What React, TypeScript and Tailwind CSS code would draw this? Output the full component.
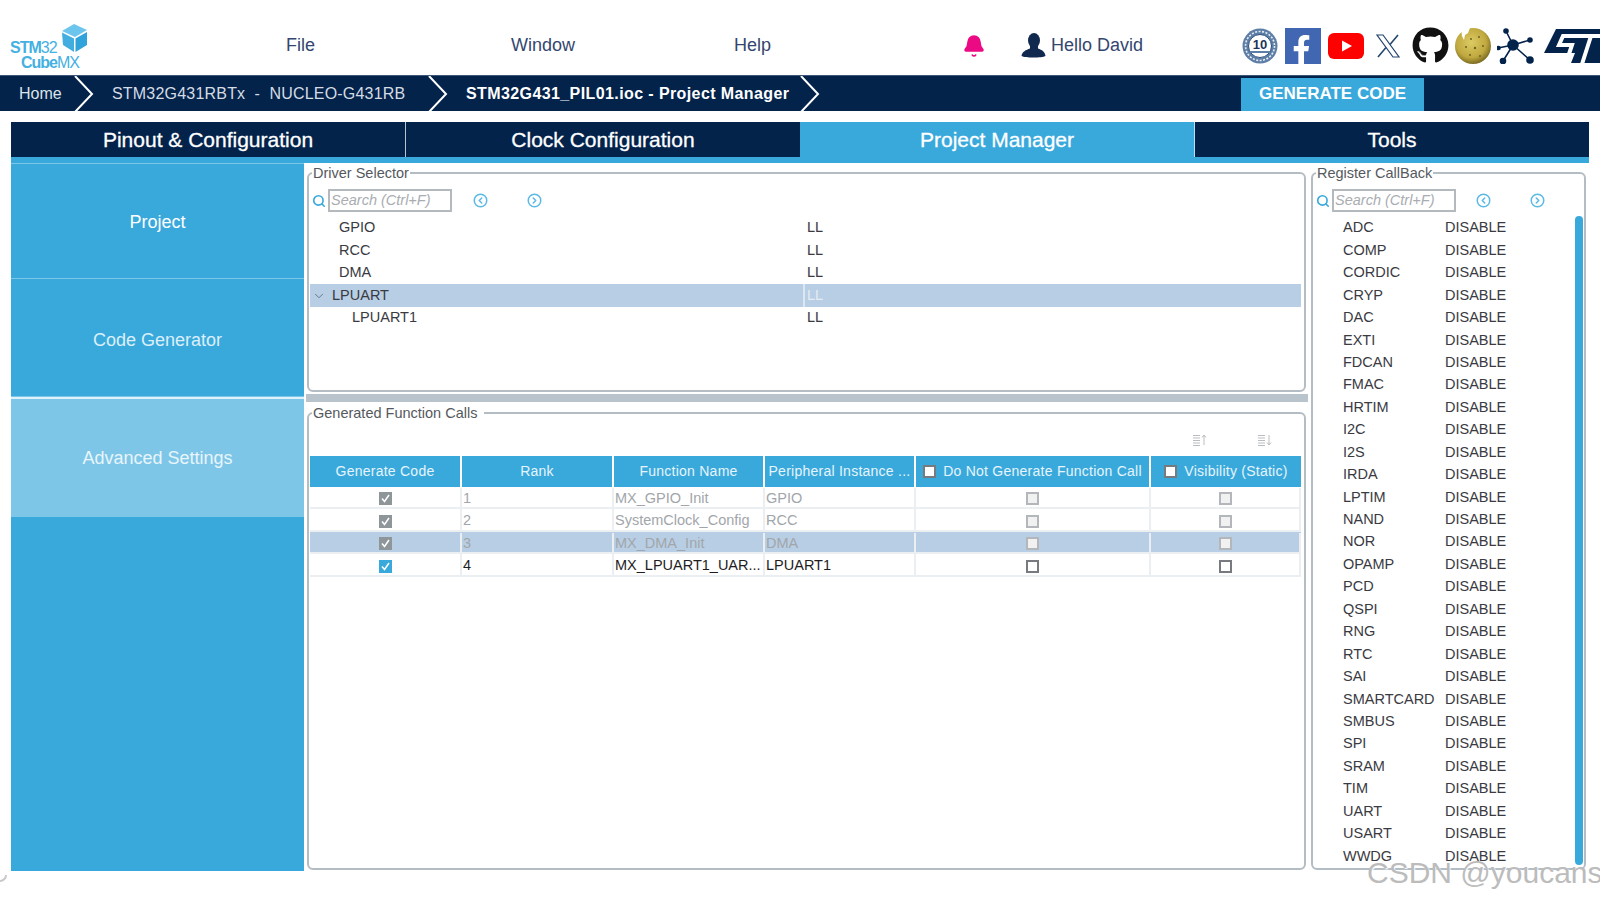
import { Bell, ChevronDown, CircleChevronLeft, CircleChevronRight, Search } from "lucide-react";
import { FaFacebookF, FaGithub } from "react-icons/fa";

const drivers = ["GPIO", "RCC", "DMA"];

const callbacks = [
    "ADC", "COMP", "CORDIC", "CRYP", "DAC", "EXTI", "FDCAN", "FMAC", "HRTIM", "I2C",
    "I2S", "IRDA", "LPTIM", "NAND", "NOR", "OPAMP", "PCD", "QSPI", "RNG", "RTC",
    "SAI", "SMARTCARD", "SMBUS", "SPI", "SRAM", "TIM", "UART", "USART", "WWDG",
];

const calls = [
    { rank: "1", name: "MX_GPIO_Init", inst: "GPIO", locked: true, selected: false },
    { rank: "2", name: "SystemClock_Config", inst: "RCC", locked: true, selected: false },
    { rank: "3", name: "MX_DMA_Init", inst: "DMA", locked: true, selected: true },
    { rank: "4", name: "MX_LPUART1_UAR...", inst: "LPUART1", locked: false, selected: false },
];

function Chevron() {
    return (
        <svg width="20" height="36" viewBox="0 0 20 36" className="shrink-0">
            <path d="M1 0 L18 18 L1 36" fill="none" stroke="#ffffff" strokeWidth="2" />
        </svg>
    );
}

function SearchBar({ gapA, gapB }: { gapA: string; gapB: string }) {
    return (
        <div className="flex items-center h-[23px] mt-[8px]">
            <div className="flex justify-center w-[19px]">
                <Search size={14} strokeWidth={2.8} color="#39a9dc" />
            </div>
            <div className="w-[124px] h-[23px] border-2 border-[#b4b9be] flex items-center pl-[1px] italic text-[14.5px] text-[#a9adb1] whitespace-nowrap">
                Search (Ctrl+F)
            </div>
            <CircleChevronLeft size={15} strokeWidth={2.4} color="#5bb9e5" className={gapA} />
            <CircleChevronRight size={15} strokeWidth={2.4} color="#5bb9e5" className={gapB} />
        </div>
    );
}

function Box({ state }: { state: "on" | "locked" | "off" | "off-locked" }) {
    if (state === "on" || state === "locked") {
        return (
            <div className={`w-[13px] h-[13px] flex items-center justify-center ${state === "on" ? "bg-[#39a9dc]" : "bg-[#8f9699]"}`}>
                <svg width="11" height="11" viewBox="0 0 11 11">
                    <path d="M2 5.5 L4.5 8.5 L9 2" fill="none" stroke="#ffffff" strokeWidth="1.5" />
                </svg>
            </div>
        );
    }
    return (
        <div className={`w-[13px] h-[13px] border-2 ${state === "off" ? "bg-white border-[#777b80]" : "bg-[#f1f1f1] border-[#b3b7bb]"}`} />
    );
}

function SortIcon({ down }: { down?: boolean }) {
    return (
        <svg width="14" height="12" viewBox="0 0 14 12" stroke="#b9bdc1" fill="none" strokeWidth="1">
            <path d="M0 1.5H7M0 4H7M0 6.5H7M0 9H7M0 11.5H7" />
            {down ? <path d="M11 1V11M9 8.5L11 11L13 8.5" /> : <path d="M11 11V1M9 3.5L11 1L13 3.5" />}
        </svg>
    );
}

function UserBust() {
    return (
        <svg width="25" height="25" viewBox="0 0 25 25" className="shrink-0 ml-[35px]" fill="#12294f">
            <ellipse cx="13" cy="7.5" rx="6" ry="7.5" />
            <path d="M9 13 L9 15.5 C5 17 1 18.5 0.5 23 C4 25 21 25 24.5 23 C24 18.5 21 17 17 15.5 L17 13 Z" />
        </svg>
    );
}

function BadgeTen() {
    return (
        <svg width="36" height="36" viewBox="0 0 36 36" className="shrink-0">
            <circle cx="18" cy="18" r="17.5" fill="#5d7ea6" />
            <circle cx="18" cy="18" r="14.5" fill="none" stroke="#e8edf3" strokeWidth="1.6" strokeDasharray="2 1.5" />
            <circle cx="18" cy="18" r="11.5" fill="#ffffff" />
            <circle cx="18" cy="18" r="11.5" fill="none" stroke="#2d4f7c" strokeWidth="1" />
            <text x="18" y="21" textAnchor="middle" fontSize="13" fontWeight="700" fontFamily="Liberation Sans, sans-serif" fill="#1d3558">10</text>
            <path d="M8 24 H28" stroke="#5d7ea6" strokeWidth="2" />
        </svg>
    );
}

function WikiGlobe() {
    return (
        <svg width="36" height="36" viewBox="0 0 36 36" className="shrink-0">
            <defs>
                <radialGradient id="globe" cx="45%" cy="40%" r="60%">
                    <stop offset="0%" stopColor="#dccb63" />
                    <stop offset="70%" stopColor="#bfa83f" />
                    <stop offset="100%" stopColor="#7d6c22" />
                </radialGradient>
            </defs>
            <circle cx="18" cy="18" r="18" fill="url(#globe)" />
            <path d="M6 0 L15 0 L13 5 L10 7 L9 12 L7 8 Z" fill="#ffffff" />
            <g fill="#6f6120">
                <circle cx="16" cy="11" r="1" />
                <circle cx="24" cy="9" r="1" />
                <circle cx="11" cy="19" r="1" />
                <circle cx="20" cy="20" r="1.2" />
                <circle cx="28" cy="18" r="1" />
                <circle cx="15" cy="27" r="1" />
                <circle cx="25" cy="28" r="1" />
            </g>
        </svg>
    );
}

function NetworkIcon() {
    return (
        <svg width="38" height="36" viewBox="0 0 38 36" className="shrink-0" stroke="#03234b" strokeWidth="1.6" fill="#03234b">
            <path d="M16 17 L9 3 M16 17 L33 12 M16 17 L1 20 M16 17 L6 33 M16 17 L33 32" />
            <circle cx="16" cy="17" r="5" />
            <circle cx="9" cy="3" r="2" />
            <circle cx="33" cy="12" r="2" />
            <circle cx="1.5" cy="20" r="1.5" />
            <circle cx="6" cy="33" r="2.5" />
            <circle cx="33" cy="32" r="3" />
        </svg>
    );
}

function StLogo() {
    return (
        <svg width="60" height="36" viewBox="0 0 60 36" className="shrink-0">
            <path d="M12 1 H60 V35 H27 L31 25 H27 L14 25 H0 Z" fill="#03234b" />
            <path d="M37 8 H19 L15 17 H28 L24 29" fill="none" stroke="#ffffff" strokeWidth="4" />
            <path d="M34 8 H60 M47 8 L38 36" fill="none" stroke="#ffffff" strokeWidth="4" />
        </svg>
    );
}

export default function App() {
    return (
        <div className="relative w-[1600px] h-[900px] overflow-hidden bg-white font-['Liberation_Sans',Arial,sans-serif]">
            {/* Top header */}
            <header className="flex h-[75px]">
                <div className="relative ml-[10px] w-[78px] h-[75px] shrink-0 pt-[40px] text-[#45b0e2] text-[16px] leading-[15px] tracking-[-1px]">
                    <div>
                        <span className="font-bold">STM</span>32
                    </div>
                    <div className="ml-[11px]">
                        <span className="font-bold">Cube</span>MX
                    </div>
                    <svg width="27" height="28" viewBox="0 0 27 28" className="absolute left-[51px] top-[24px]">
                        <path d="M13 0 L26 6 L14 13 L1 7 Z" fill="#6cc5ec" />
                        <path d="M1 8.5 L13 14.5 L13 28 L2 21 Z" fill="#42aee0" />
                        <path d="M14.5 14.5 L26 8 L26 21 L14.5 28 Z" fill="#2fa3da" />
                    </svg>
                </div>
                <div className="flex items-center pt-[16px] whitespace-nowrap">
                    <nav className="flex text-[18px] text-[#34466f]">
                        <span className="ml-[198px]">File</span>
                        <span className="ml-[196px]">Window</span>
                        <span className="ml-[159px]">Help</span>
                    </nav>
                    <Bell size={24} color="#ec0a84" fill="#ec0a84" strokeWidth={1.5} className="ml-[191px] shrink-0" />
                    <UserBust />
                    <span className="ml-[5px] text-[18px] text-[#34466f]">Hello David</span>
                    <div className="flex items-center ml-[99px]">
                        <BadgeTen />
                        <div className="w-[36px] h-[36px] ml-[7px] bg-[#4267b2] flex items-end justify-end pr-[5px]">
                            <FaFacebookF size={29} color="#ffffff" />
                        </div>
                        <svg width="36" height="26" viewBox="0 0 36 26" className="ml-[7px] shrink-0">
                            <rect width="36" height="26" rx="6" fill="#ff0000" />
                            <path d="M14 7.5 L24 13 L14 18.5 Z" fill="#ffffff" />
                        </svg>
                        <svg width="24" height="24" viewBox="0 0 24 24" className="ml-[12px] shrink-0" fill="none" stroke="#23466f" strokeWidth="1.2">
                            <path d="M1 1 H7 L23 23 H17 Z" />
                            <path d="M22 1 L14 10.5 M10 13.5 L2 23" strokeWidth="1.6" />
                        </svg>
                        <FaGithub size={37} color="#111111" className="ml-[12px] shrink-0" />
                        <div className="ml-[6px]">
                            <WikiGlobe />
                        </div>
                        <div className="ml-[6px]">
                            <NetworkIcon />
                        </div>
                        <div className="ml-[9px]">
                            <StLogo />
                        </div>
                    </div>
                </div>
            </header>

            {/* Breadcrumb bar */}
            <div className="flex items-center h-[36px] bg-[#03234b] text-[16px] border-t border-[#3d5678]">
                <span className="pl-[19px] w-[74px] shrink-0 text-[#dde3ea]">Home</span>
                <Chevron />
                <span className="pl-[18px] w-[334px] shrink-0 text-[#d5dce4] whitespace-pre tracking-[0.2px]">STM32G431RBTx  -  NUCLEO-G431RB</span>
                <Chevron />
                <span className="pl-[18px] w-[352px] shrink-0 font-bold text-white tracking-[0.4px] whitespace-nowrap">STM32G431_PIL01.ioc - Project Manager</span>
                <Chevron />
                <button className="ml-[421px] w-[183px] h-[33px] mt-[1px] bg-[#39a9dc] text-white font-bold text-[17px]">GENERATE CODE</button>
            </div>

            {/* Perspective tabs */}
            <div className="ml-[11px] w-[1578px] mt-[11px]">
                <div className="flex h-[35px] text-[21px] text-white [-webkit-text-stroke:0.3px_#ffffff]">
                    <div className="w-[395px] flex items-center justify-center bg-[#03234b] border-r border-[#b8c4d0]">Pinout &amp; Configuration</div>
                    <div className="w-[394px] flex items-center justify-center bg-[#03234b]">Clock Configuration</div>
                    <div className="w-[395px] flex items-center justify-center bg-[#39a9dc] border-r border-[#b8dff2]">Project Manager</div>
                    <div className="w-[394px] flex items-center justify-center bg-[#03234b]">Tools</div>
                </div>
                <div className="h-[6px] bg-[#39a9dc]" />
            </div>

            <div className="flex ml-[11px] h-[708px]">
                {/* Left side menu */}
                <aside className="w-[293px] shrink-0 bg-[#39a9dc] text-[18px]">
                    <div className="h-[116px] flex items-center justify-center pt-[2px] text-white border-b border-[#7cc6e9] border-t">Project</div>
                    <div className="h-[118px] flex items-center justify-center pt-[5px] text-[#dceff9] border-b border-[#7cc6e9]">Code Generator</div>
                    <div className="h-[120px] flex items-center justify-center text-[#e8f5fb] bg-[#7dc6e8] border-t-2 border-[#dff1fa]">Advanced Settings</div>
                </aside>

                {/* Center column */}
                <div className="w-[1004px] shrink-0">
                    <fieldset className="ml-[3px] w-[999px] h-[227px] mt-[2px] border-2 border-[#b5bdc4] rounded-[6px]">
                        <legend className="ml-[3px] px-[1px] text-[14.5px] leading-[16px] text-[#55595e]">Driver Selector</legend>
                        <SearchBar gapA="ml-[21px]" gapB="ml-[39px]" />
                        <div className="ml-[1px] w-[991px] mt-[5px] text-[14.5px] text-[#3a3a42]">
                            {drivers.map((d) => (
                                <div key={d} className="flex items-center h-[22.45px]">
                                    <span className="w-[495px] pl-[29px]">{d}</span>
                                    <span className="pl-[2px]">LL</span>
                                </div>
                            ))}
                            <div className="flex items-center h-[22.45px] bg-[#b8cee4]">
                                <div className="w-[495px] flex items-center pl-[2px] border-r-2 border-[#dbe6f1] h-full">
                                    <ChevronDown size={14} strokeWidth={1.4} color="#55657a" />
                                    <span className="ml-[6px]">LPUART</span>
                                </div>
                                <span className="pl-[2px] text-[#e3ebf3]">LL</span>
                            </div>
                            <div className="flex items-center h-[22.45px]">
                                <span className="w-[495px] pl-[42px]">LPUART1</span>
                                <span className="pl-[2px]">LL</span>
                            </div>
                        </div>
                    </fieldset>

                    <div className="h-[8px] ml-[2px] mt-[2px] bg-[#b9c3cb]" />

                    <fieldset className="ml-[3px] w-[999px] h-[465px] mt-[3px] border-2 border-[#b5bdc4] rounded-[6px]">
                        <legend className="ml-[3px] pl-[1px] pr-[7px] text-[14.5px] leading-[16px] text-[#55595e]">Generated Function Calls</legend>
                        <div className="flex justify-end items-center gap-[51px] pr-[32px] h-[18px] mt-[10px]">
                            <SortIcon />
                            <SortIcon down />
                        </div>
                        <div className="ml-[1px] w-[991px] mt-[7px] text-[14px]">
                            <div className="grid grid-cols-[152px_152px_151px_151px_235px_150px] h-[31px] text-[#e6f4fb] tracking-[0.25px] whitespace-nowrap">
                                <div className="flex items-center justify-center bg-[#39a9dc] border-r-2 border-white">Generate Code</div>
                                <div className="flex items-center justify-center bg-[#39a9dc] border-r-2 border-white">Rank</div>
                                <div className="flex items-center justify-center bg-[#39a9dc] border-r-2 border-white">Function Name</div>
                                <div className="flex items-center justify-center bg-[#39a9dc] border-r-2 border-white">Peripheral Instance ...</div>
                                <div className="flex items-center justify-center gap-[7px] bg-[#39a9dc] border-r-2 border-white">
                                    <Box state="off" />
                                    Do Not Generate Function Call
                                </div>
                                <div className="flex items-center justify-center gap-[7px] bg-[#39a9dc]">
                                    <Box state="off" />
                                    Visibility (Static)
                                </div>
                            </div>
                            {calls.map((c) => (
                                <div
                                    key={c.rank}
                                    className={`grid grid-cols-[152px_152px_151px_151px_235px_150px] h-[22.45px] pt-[1px] border-b-2 border-[#eceff2] text-[14.5px] ${c.selected ? "bg-[#b8cee4]" : ""} ${c.locked ? "text-[#a2a6aa]" : "text-[#1d1d22]"}`}
                                >
                                    <div className="flex items-center justify-center border-r-2 border-[#eceff2]">
                                        <Box state={c.locked ? "locked" : "on"} />
                                    </div>
                                    <div className="flex items-center pl-[1px] border-r-2 border-[#eceff2]">{c.rank}</div>
                                    <div className="flex items-center pl-[1px] border-r-2 border-[#eceff2] whitespace-nowrap overflow-hidden">{c.name}</div>
                                    <div className="flex items-center pl-[1px] border-r-2 border-[#eceff2]">{c.inst}</div>
                                    <div className="flex items-center justify-center border-r-2 border-[#eceff2]">
                                        <Box state={c.locked ? "off-locked" : "off"} />
                                    </div>
                                    <div className="flex items-center justify-center border-r-2 border-[#eceff2]">
                                        <Box state={c.locked ? "off-locked" : "off"} />
                                    </div>
                                </div>
                            ))}
                        </div>
                    </fieldset>
                </div>

                {/* Register callback column */}
                <fieldset className="relative ml-[3px] w-[275px] h-[705px] mt-[2px] border-2 border-[#b5bdc4] rounded-[6px]">
                    <legend className="ml-[3px] px-[1px] text-[14.5px] leading-[16px] text-[#55595e]">Register CallBack</legend>
                    <SearchBar gapA="ml-[20px]" gapB="ml-[39px]" />
                    <div className="mt-[5px] text-[14.5px] text-[#3a3a42]">
                        {callbacks.map((c) => (
                            <div key={c} className="flex items-center h-[22.45px]">
                                <span className="w-[132px] pl-[30px]">{c}</span>
                                <span>DISABLE</span>
                            </div>
                        ))}
                    </div>
                    <div className="absolute left-[262px] top-[35px] w-[8px] h-[649px] rounded-full bg-[#39a9dc]" />
                </fieldset>
            </div>

            {/* Screenshot leftovers on top of the page */}
            <div className="absolute left-0 top-[875px] w-[7px] h-[7px] border-r-2 border-b-2 border-[#c9c9c9] rounded-br-[7px]" />
            <div className="absolute left-[1367px] top-[856px] whitespace-nowrap text-[30px] leading-[34px] text-[#bcbcbc] [text-shadow:1px_1px_1px_#ffffff]">
                CSDN @youcans/
            </div>
        </div>
    );
}
